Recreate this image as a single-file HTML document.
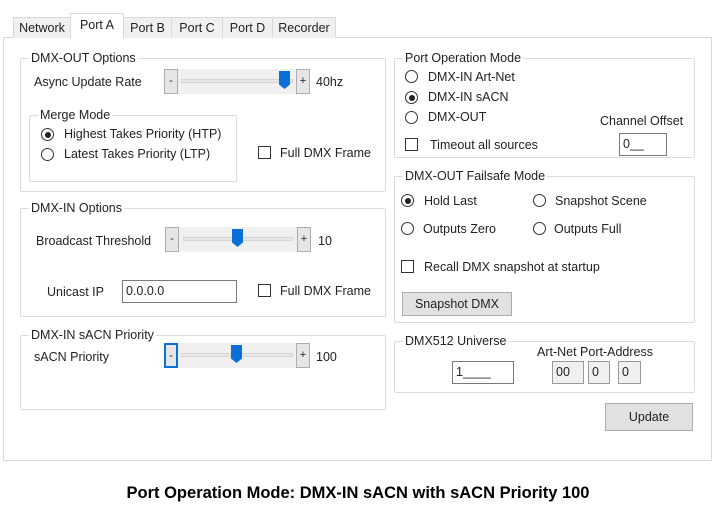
<!DOCTYPE html><html><head><meta charset="utf-8"><style>
body{margin:0;width:725px;height:511px;background:#fff;position:relative;font-family:"Liberation Sans",sans-serif;font-size:12px;color:#222;overflow:hidden}
.a{position:absolute}
.tab{position:absolute;top:17px;height:21px;background:#f0f0f0;border:1px solid #d9d9d9;border-bottom:none;box-sizing:border-box;text-align:center;line-height:20px;font-size:12.5px}
.grp{position:absolute;border:1px solid #dcdcdc;border-radius:2px;box-sizing:border-box}
.gt{position:absolute;top:-8px;left:8px;background:#fff;padding:0 2px;font-size:12.5px;line-height:14px}
.rad{position:absolute;width:13px;height:13px;border:1px solid #333;border-radius:50%;box-sizing:border-box;background:#fff}
.rad.on::after{content:"";position:absolute;left:2.5px;top:2.5px;width:6px;height:6px;border-radius:50%;background:#222}
.chk{position:absolute;width:13px;height:13px;border:1px solid #333;box-sizing:border-box;background:#fff}
.t{position:absolute;font-size:12.5px;line-height:14px;white-space:nowrap}
.btn{position:absolute;background:#e1e1e1;border:1px solid #adadad;box-sizing:border-box;text-align:center}
.inp{position:absolute;border:1px solid #7a7a7a;box-sizing:border-box;background:#fff;font-size:12.5px;padding-left:3px;line-height:20px}
.sb{position:absolute;width:14px;background:#e6e6e6;border:1px solid #adadad;box-sizing:border-box;text-align:center;font-size:11px}
.trk{position:absolute;height:4px;background:#e7e7e7;border:1px solid #d6d6d6;box-sizing:border-box}
.th{position:absolute;width:11px;height:18px;background:#0a6fd6;clip-path:polygon(0 0,100% 0,100% 75%,50% 100%,0 75%)}
</style></head><body>
<div class="a" style="left:3px;top:37px;width:709px;height:424px;border:1px solid #d9d9d9;box-sizing:border-box"></div>
<div class="tab" style="left:13px;width:58px">Network</div>
<div class="tab" style="left:70px;width:54px;top:13px;height:26px;background:#fff;line-height:22px">Port A</div>
<div class="tab" style="left:123px;width:49px">Port B</div>
<div class="tab" style="left:171px;width:52px">Port C</div>
<div class="tab" style="left:222px;width:51px">Port D</div>
<div class="tab" style="left:272px;width:64px">Recorder</div>

<div class="grp" style="left:20px;top:58px;width:366px;height:134px"><div class="gt">DMX-OUT Options</div></div>
<div class="t" style="left:34px;top:75px">Async Update Rate</div>
<div class="sb" style="left:164px;top:69px;height:25px;line-height:23px">-</div>
<div class="a" style="left:178px;top:69px;width:118px;height:25px;background:#f0f0f0"></div>
<div class="trk" style="left:181px;top:79px;width:112px"></div>
<div class="th" style="left:279px;top:71px"></div>
<div class="sb" style="left:296px;top:69px;height:25px;line-height:23px">+</div>
<div class="t" style="left:316px;top:75px">40hz</div>
<div class="grp" style="left:29px;top:115px;width:208px;height:67px"><div class="gt">Merge Mode</div></div>
<div class="rad on" style="left:41px;top:128px"></div><div class="t" style="left:64px;top:127px">Highest Takes Priority (HTP)</div>
<div class="rad" style="left:41px;top:148px"></div><div class="t" style="left:64px;top:147px">Latest Takes Priority (LTP)</div>
<div class="chk" style="left:258px;top:146px"></div><div class="t" style="left:280px;top:146px">Full DMX Frame</div>

<div class="grp" style="left:20px;top:208px;width:366px;height:109px"><div class="gt">DMX-IN Options</div></div>
<div class="t" style="left:36px;top:234px">Broadcast Threshold</div>
<div class="sb" style="left:165px;top:227px;height:25px;line-height:23px">-</div>
<div class="a" style="left:179px;top:227px;width:118px;height:25px;background:#f0f0f0"></div>
<div class="trk" style="left:183px;top:237px;width:110px"></div>
<div class="th" style="left:232px;top:229px"></div>
<div class="sb" style="left:297px;top:227px;height:25px;line-height:23px">+</div>
<div class="t" style="left:318px;top:234px">10</div>
<div class="t" style="left:47px;top:285px">Unicast IP</div>
<div class="inp" style="left:122px;top:280px;width:115px;height:23px">0.0.0.0</div>
<div class="chk" style="left:258px;top:284px"></div><div class="t" style="left:280px;top:284px">Full DMX Frame</div>

<div class="grp" style="left:20px;top:335px;width:366px;height:75px"><div class="gt">DMX-IN sACN Priority</div></div>
<div class="t" style="left:34px;top:350px">sACN Priority</div>
<div class="sb" style="left:164px;top:343px;height:25px;line-height:23px;border:2px solid #0a6fd6">-</div>
<div class="a" style="left:178px;top:343px;width:118px;height:25px;background:#f0f0f0"></div>
<div class="trk" style="left:181px;top:353px;width:112px"></div>
<div class="th" style="left:231px;top:345px"></div>
<div class="sb" style="left:296px;top:343px;height:25px;line-height:23px">+</div>
<div class="t" style="left:316px;top:350px">100</div>

<div class="grp" style="left:394px;top:58px;width:301px;height:100px"><div class="gt">Port Operation Mode</div></div>
<div class="rad" style="left:405px;top:70px"></div><div class="t" style="left:428px;top:70px">DMX-IN Art-Net</div>
<div class="rad on" style="left:405px;top:91px"></div><div class="t" style="left:428px;top:90px">DMX-IN sACN</div>
<div class="rad" style="left:405px;top:111px"></div><div class="t" style="left:428px;top:110px">DMX-OUT</div>
<div class="chk" style="left:405px;top:138px"></div><div class="t" style="left:430px;top:138px">Timeout all sources</div>
<div class="t" style="left:600px;top:114px">Channel Offset</div>
<div class="inp" style="left:619px;top:133px;width:48px;height:23px">0__</div>

<div class="grp" style="left:394px;top:176px;width:301px;height:147px"><div class="gt">DMX-OUT Failsafe Mode</div></div>
<div class="rad on" style="left:401px;top:194px"></div><div class="t" style="left:424px;top:194px">Hold Last</div>
<div class="rad" style="left:533px;top:194px"></div><div class="t" style="left:555px;top:194px">Snapshot Scene</div>
<div class="rad" style="left:401px;top:222px"></div><div class="t" style="left:423px;top:222px">Outputs Zero</div>
<div class="rad" style="left:533px;top:222px"></div><div class="t" style="left:554px;top:222px">Outputs Full</div>
<div class="chk" style="left:401px;top:260px"></div><div class="t" style="left:424px;top:260px">Recall DMX snapshot at startup</div>
<div class="btn" style="left:402px;top:292px;width:110px;height:24px;line-height:22px;font-size:12.5px">Snapshot DMX</div>

<div class="grp" style="left:394px;top:341px;width:301px;height:52px"><div class="gt">DMX512 Universe</div></div>
<div class="t" style="left:537px;top:345px">Art-Net Port-Address</div>
<div class="inp" style="left:452px;top:361px;width:62px;height:23px">1____</div>
<div class="inp" style="left:552px;top:361px;width:32px;height:23px;background:#f0f0f0;border-color:#999">00</div>
<div class="inp" style="left:588px;top:361px;width:22px;height:23px;background:#f0f0f0;border-color:#999">0</div>
<div class="inp" style="left:618px;top:361px;width:23px;height:23px;background:#f0f0f0;border-color:#999">0</div>
<div class="btn" style="left:605px;top:403px;width:88px;height:28px;line-height:26px;font-size:12.5px">Update</div>

<div class="a" style="left:0;top:484px;width:716px;text-align:center;font-weight:bold;font-size:16.5px;color:#000">Port Operation Mode: DMX-IN sACN with sACN Priority 100</div>
</body></html>
